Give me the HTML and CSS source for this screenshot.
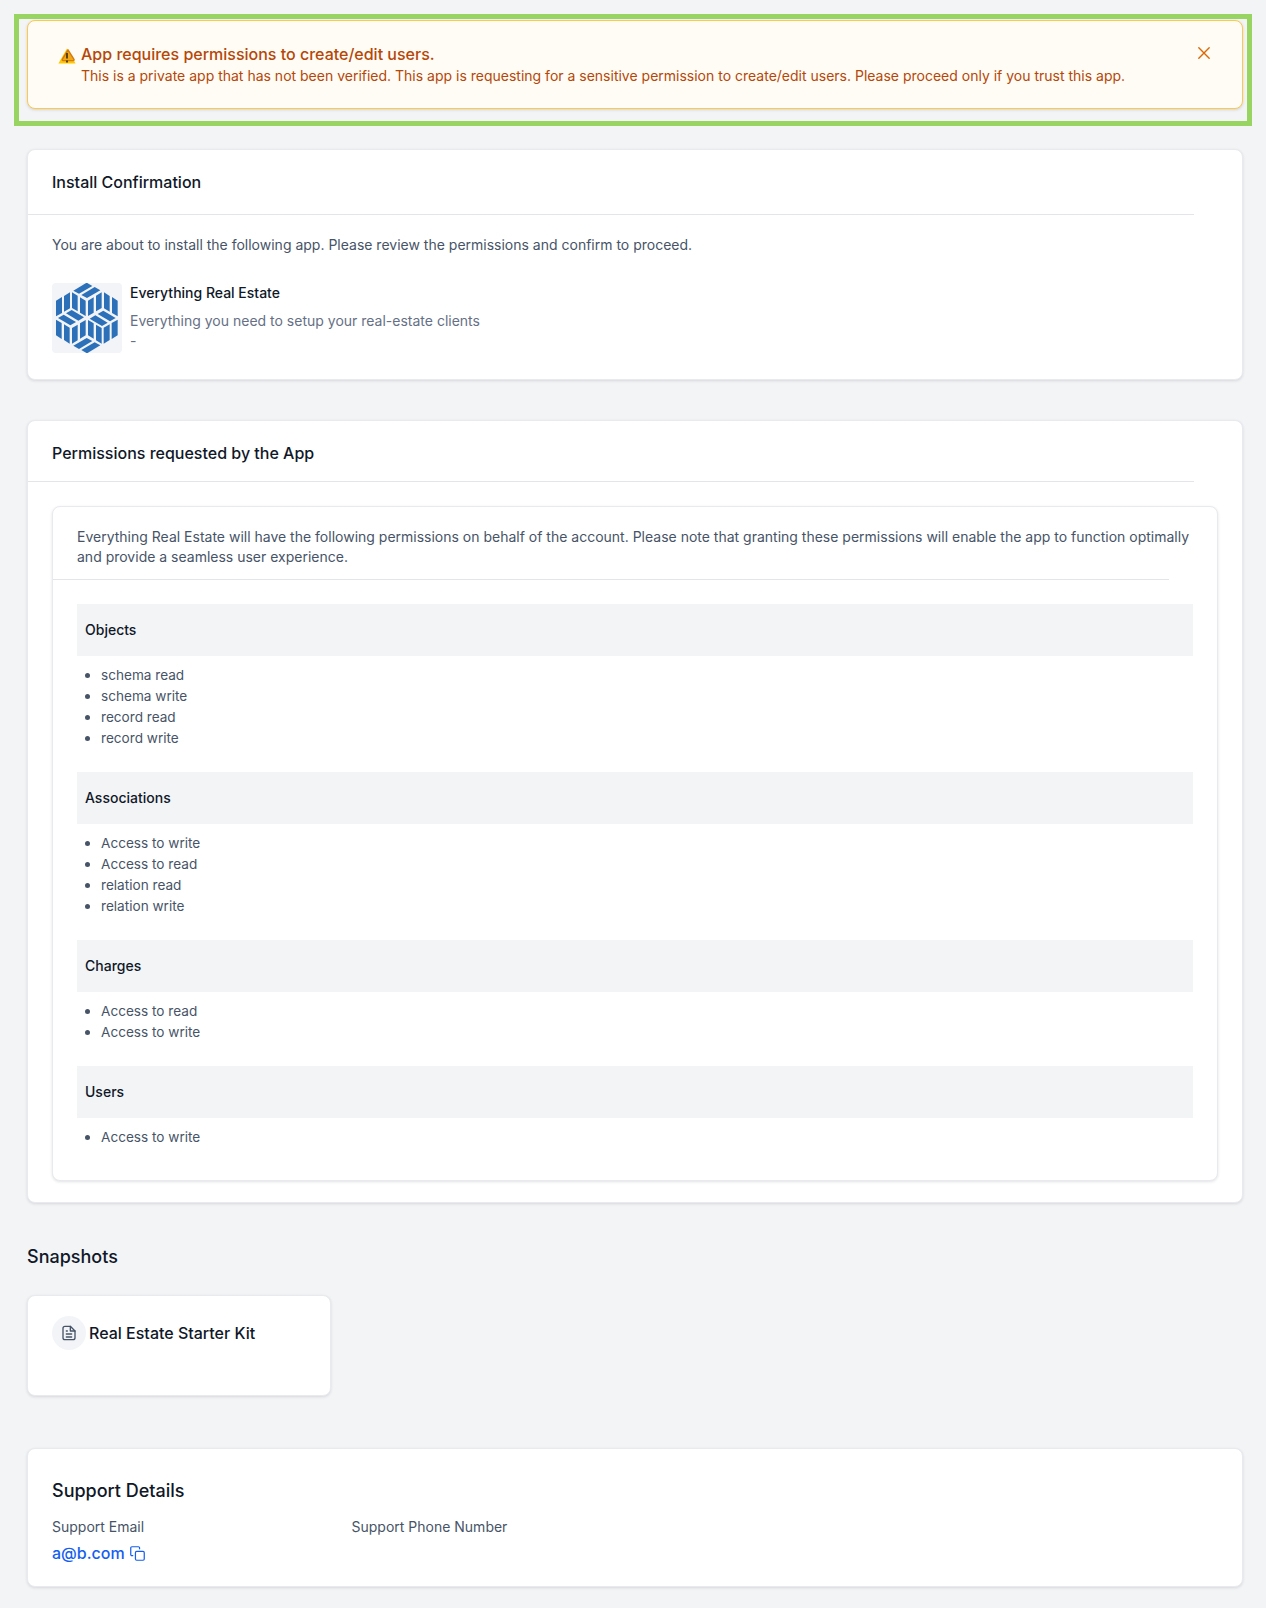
FILE: index.html
```html
<!DOCTYPE html>
<html lang="en">
<head>
    <meta charset="UTF-8">
    <title>Install App</title>
    <meta name="viewport" content="width=device-width, initial-scale=1.0">
    <link rel="stylesheet" href="styles.css">
</head>
<body>
    <div class="highlight">
        <div class="alert">
            <svg class="alert-icon" width="18" height="16" viewBox="0 0 18 16">
                <path d="M9 .5L17.6 15.5H.4z" fill="#ffc800"/>
                <path d="M10 1.8L16 11.4a.8.8 0 0 1-.7 1.2H5a.8.8 0 0 1-.7-1.2z" fill="#f0a818" stroke="#d47a10" stroke-width="1.4" stroke-linejoin="round"/>
                <path d="M9 5v5.5M9 12.6v1.8" stroke="#4a3808" stroke-width="1.8"/>
            </svg>
            <div class="alert-body">
                <div class="alert-title">App requires permissions to create/edit users.</div>
                <div class="alert-text">This is a private app that has not been verified. This app is requesting for a sensitive permission to create/edit users. Please proceed only if you trust this app.</div>
            </div>
            <svg class="alert-close" width="20" height="20" viewBox="0 0 20 20" fill="none" stroke="#dc6803" stroke-width="1.4" stroke-linecap="round">
                <path d="M4.8 4.8l10.4 10.4M15.2 4.8L4.8 15.2"/>
            </svg>
        </div>
    </div>

    <section class="card install">
        <h2 class="card-title">Install Confirmation</h2>
        <div class="card-divider"></div>
        <p class="install-text">You are about to install the following app. Please review the permissions and confirm to proceed.</p>
        <div class="app">
            <svg class="app-logo" width="70" height="70" viewBox="36 39 210 210">
                <defs>
                    <g id="logo-half">
                        <path d="M100 62L140 38L157 48L117 71z"/>
                        <path d="M124 75L164 51L181 61L141 84z"/>
                        <path d="M48 92L66 81V129L48 139z"/>
                        <path d="M72 78L90 67V115L72 125z"/>
                        <path d="M96 67L113 77V124L96 114z"/>
                        <path d="M120 82L137 92V138L120 128z"/>
                        <path d="M144 92L161 82V128L144 138z"/>
                        <path d="M168 77L185 67V114L168 124z"/>
                        <path d="M192 67L209 78V125L192 115z"/>
                        <path d="M216 81L233 92V139L216 129z"/>
                        <path d="M78 130L95 120L132 142L115 152z"/>
                        <path d="M54 144L71 134L108 156L91 166z"/>
                    </g>
                </defs>
                <g fill="#2b70b9">
                    <use href="#logo-half"/>
                    <use href="#logo-half" transform="rotate(180 140.5 144)"/>
                </g>
            </svg>
            <div>
                <div class="app-name">Everything Real Estate</div>
                <div class="app-desc">Everything you need to setup your real-estate clients<br>-</div>
            </div>
        </div>
    </section>

    <section class="card permissions">
        <h2 class="card-title">Permissions requested by the App</h2>
        <div class="card-divider"></div>
        <div class="card inner">
            <p class="inner-text">Everything Real Estate will have the following permissions on behalf of the account. Please note that granting these permissions will enable the app to function optimally and provide a seamless user experience.</p>
            <div class="card-divider"></div>
            <div class="groups">
                <h3>Objects</h3>
                <ul>
                    <li>schema read</li>
                    <li>schema write</li>
                    <li>record read</li>
                    <li>record write</li>
                </ul>
                <h3>Associations</h3>
                <ul>
                    <li>Access to write</li>
                    <li>Access to read</li>
                    <li>relation read</li>
                    <li>relation write</li>
                </ul>
                <h3>Charges</h3>
                <ul>
                    <li>Access to read</li>
                    <li>Access to write</li>
                </ul>
                <h3>Users</h3>
                <ul>
                    <li>Access to write</li>
                </ul>
            </div>
        </div>
    </section>

    <h2 class="section-title">Snapshots</h2>
    <div class="card snapshot">
        <span class="snapshot-icon">
            <svg width="16" height="16" viewBox="0 0 24 24" fill="none" stroke="#475467" stroke-width="2" stroke-linecap="round" stroke-linejoin="round">
                <path d="M14 2H6a3 3 0 0 0-3 3v14a3 3 0 0 0 3 3h12a3 3 0 0 0 3-3V9z"/>
                <path d="M14 2v7h7M8 9h1.5M8 13.5h8M8 18h8"/>
            </svg>
        </span>
        <span class="snapshot-name">Real Estate Starter Kit</span>
    </div>

    <section class="card support">
        <h2 class="support-title">Support Details</h2>
        <div class="support-grid">
            <div>
                <div class="support-label">Support Email</div>
                <div class="support-email">
                    <span>a@b.com</span>
                    <svg width="15" height="15" viewBox="0 0 16 16" fill="none" stroke="#155eef" stroke-width="1.3" stroke-linecap="round" stroke-linejoin="round">
                        <path d="M3 10.2H2A1.2 1.2 0 0 1 .8 9V2A1.2 1.2 0 0 1 2 .8h7A1.2 1.2 0 0 1 10.2 2v1"/>
                        <rect x="5.8" y="5.8" width="9.4" height="9.4" rx="1.3"/>
                    </svg>
                </div>
            </div>
            <div>
                <div class="support-label">Support Phone Number</div>
            </div>
        </div>
    </section>
</body>
</html>
```
FILE: styles.css
```css
* {
    box-sizing: border-box;
}

body {
    margin: 0;
    padding: 14px 14px 0;
    min-height: 1608px;
    font-family: Inter, "Liberation Sans", sans-serif;
    font-size: 14px;
    line-height: 20px;
    color: #475467;
    background: #f3f4f6;
}

h2, h3, p, ul {
    margin: 0;
    padding: 0;
}

.highlight {
    height: 112px;
    width: 1238px;
    border: 5px solid #98d462;
    padding: 1px 4px 0 8px;
}

.alert {
    display: flex;
    height: 89px;
    padding: 23px 28px 23px 30px;
    background: #fffcf5;
    border: 1px solid #fec84b;
    border-radius: 8px;
    box-shadow: 0 1px 3px rgba(16, 24, 40, 0.15);
    color: #b54708;
}

.alert-icon {
    margin-top: 4px;
}

.alert-body {
    flex: 1;
    margin-left: 5px;
}

.alert-title {
    font-size: 16px;
    font-weight: 500;
    line-height: 20px;
}

.alert-text {
    padding-top: 1px;
    line-height: 22px;
    white-space: nowrap;
}

.alert-close {
    margin-top: -1px;
}

.card {
    margin: 0 9px 0 13px;
    background: #fff;
    border: 1px solid #e9eaee;
    border-radius: 8px;
    box-shadow: 0 1px 3px rgba(16, 24, 40, 0.12);
}

.card-title {
    padding-left: 24px;
    font-size: 16px;
    font-weight: 500;
    line-height: 24px;
    color: #101828;
}

.card-divider {
    height: 1px;
    margin-right: 48px;
    background: #e4e5e8;
}

.install {
    height: 231px;
    margin-top: 23px;
    padding-top: 20px;
}

.install .card-divider {
    margin-top: 20px;
}

.install-text {
    padding: 20px 24px 0;
}

.app {
    display: flex;
    gap: 8px;
    padding: 28px 24px 0;
}

.app-logo {
    background: #f2f4f7;
    border-radius: 4px;
}

.app-name {
    font-weight: 500;
    color: #101828;
}

.app-desc {
    padding-top: 8px;
    color: #667085;
}

.permissions {
    height: 783px;
    margin-top: 40px;
    padding-top: 20px;
}

.permissions > .card-divider {
    margin-top: 16px;
}

.inner {
    height: 675px;
    margin: 24px 24px 0;
    padding-top: 20px;
}

.inner-text {
    padding: 0 24px 12px;
}

.groups {
    padding: 24px 24px 0;
}

.groups h3 {
    padding: 16px 8px;
    font-size: 14px;
    font-weight: 500;
    color: #101828;
    background: #f3f4f6;
}

.groups ul {
    padding: 8px 0 24px 24px;
    font-size: 13.6px;
    line-height: 21px;
}

.groups li {
    height: 21px;
}

.groups li::marker {
    font-size: 14px;
}

.section-title {
    margin: 40px 0 0 13px;
    font-size: 18px;
    font-weight: 500;
    line-height: 28px;
    color: #101828;
}

.snapshot {
    display: flex;
    gap: 3px;
    width: 304px;
    height: 101px;
    margin-top: 24px;
    padding: 20px 24px;
}

.snapshot-icon {
    display: flex;
    align-items: center;
    justify-content: center;
    width: 34px;
    height: 34px;
    border-radius: 50%;
    background: #f2f4f7;
}

.snapshot-name {
    font-size: 16px;
    font-weight: 500;
    line-height: 34px;
    color: #101828;
}

.support {
    height: 139px;
    margin-top: 52px;
    padding: 28px 24px 0;
}

.support-title {
    font-size: 18px;
    font-weight: 500;
    line-height: 28px;
    color: #101828;
}

.support-grid {
    display: grid;
    grid-template-columns: 299.5px 1fr;
    padding-top: 12px;
}

.support-email {
    display: flex;
    align-items: center;
    gap: 5px;
    padding-top: 4px;
    font-size: 16px;
    font-weight: 500;
    line-height: 24px;
    color: #155eef;
}
```
